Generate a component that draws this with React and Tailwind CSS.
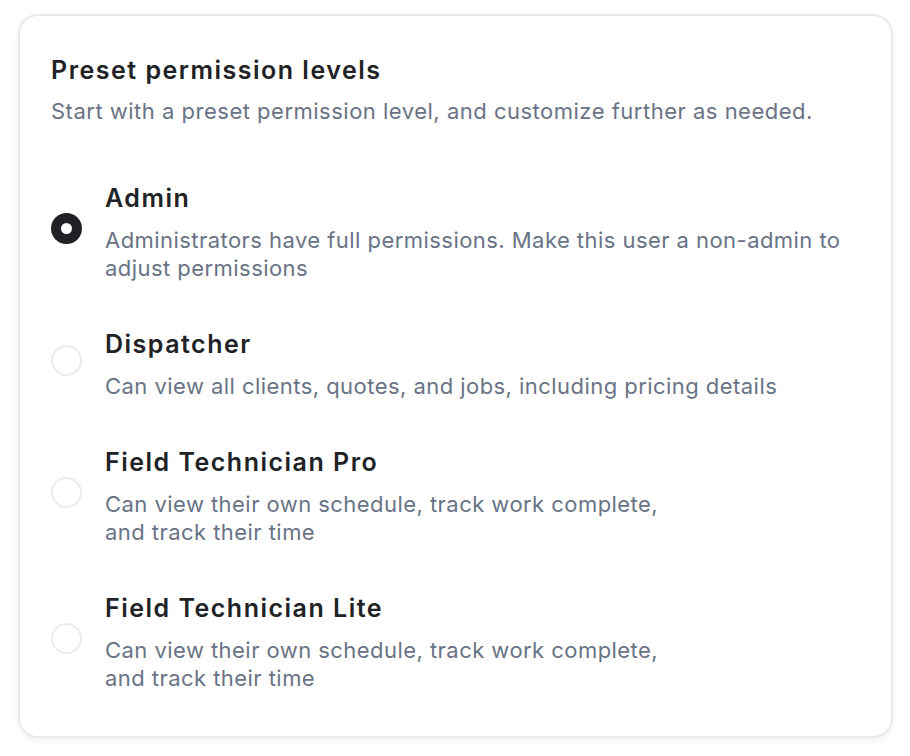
const levels = [
  {
    name: "Admin",
    desc: ["Administrators have full permissions. Make this user a non-admin to", "adjust permissions"],
    checked: true,
  },
  {
    name: "Dispatcher",
    desc: ["Can view all clients, quotes, and jobs, including pricing details"],
  },
  {
    name: "Field Technician Pro",
    desc: ["Can view their own schedule, track work complete,", "and track their time"],
  },
  {
    name: "Field Technician Lite",
    desc: ["Can view their own schedule, track work complete,", "and track their time"],
  },
]

function Radio({ checked }) {
  if (checked) return (
    <span className="w-[31px] h-[31px] rounded-full bg-[#1f2125] flex items-center justify-center">
      <span className="w-[11px] h-[11px] rounded-full bg-white"></span>
    </span>
  )
  return <span className="block w-[31px] h-[31px] rounded-full border-2 border-[#ececec] bg-white"></span>
}

export default function App() {
  return (
    <div className="w-[910px] h-[756px] bg-white pt-[14px] pl-[18px] font-['Inter',sans-serif]">
      <div className="w-[875px] h-[724px] rounded-[20px] border-2 border-[#e9e9ea] shadow-[0_3px_6px_rgba(0,0,0,0.06)] pl-[31px] pr-4 pt-[40px]">
        <h2 className="text-[25px] leading-[28px] font-semibold tracking-[1.5px] text-[#202226] whitespace-nowrap">Preset permission levels</h2>
        <p className="mt-[13px] text-[22px] leading-[28px] tracking-[0.5px] text-[#697386] whitespace-nowrap">
          Start with a preset permission level, and customize further as needed.
        </p>
        <div className="mt-[59px] flex flex-col gap-[48px]">
          {levels.map(l => (
            <div key={l.name} className="flex items-center gap-[23px]">
              <div className="shrink-0 -mt-[10px]"><Radio checked={l.checked} /></div>
              <div>
                <div className="text-[25px] leading-[28px] font-semibold tracking-[1.5px] text-[#202226]">{l.name}</div>
                <div className="mt-[14px] text-[22px] leading-[28px] tracking-[0.45px] text-[#697386] whitespace-nowrap">
                  {l.desc.map((d, i) => <div key={i}>{d}</div>)}
                </div>
              </div>
            </div>
          ))}
        </div>
      </div>
    </div>
  )
}
